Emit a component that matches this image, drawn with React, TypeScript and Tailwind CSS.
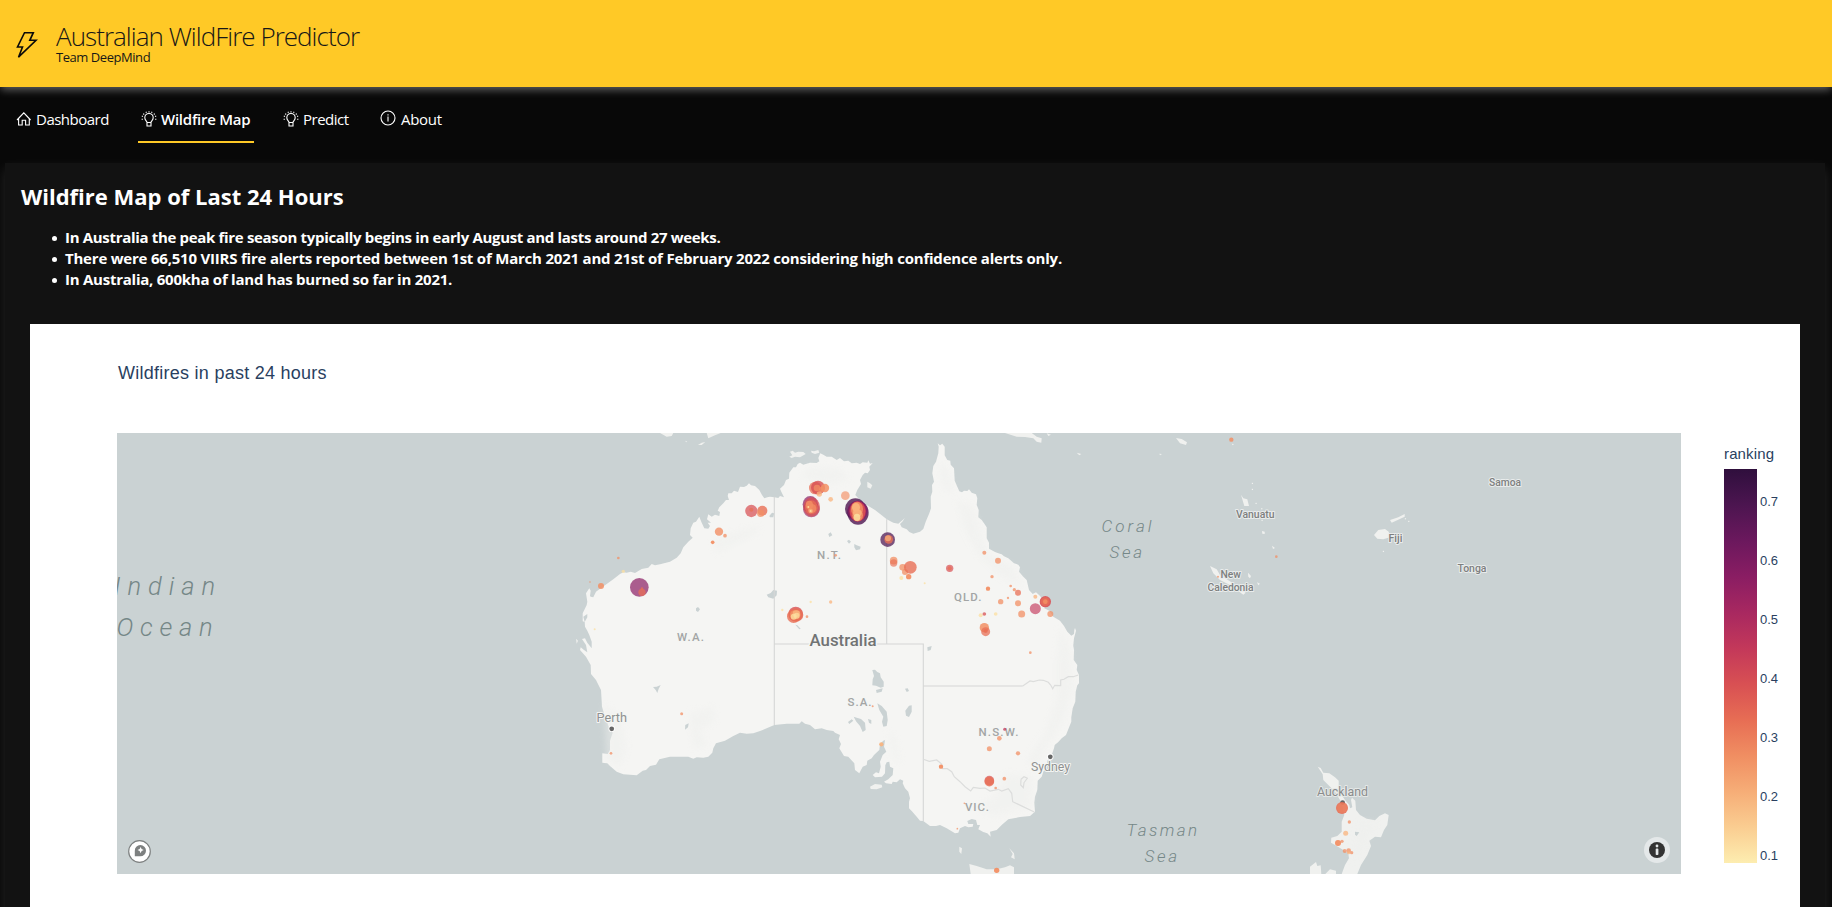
type Pt = [number, number];
type Dot = [number, number, number, string, number?];

// Survey sheets: each sheet stores points at three units per map unit, from its own origin.
const at = (ox: number, oy: number, pts: Pt[]): Pt[] =>
  pts.map(([x, y]) => [ox + x / 3, oy + y / 3]);
const toPath = (pts: Pt[]) =>
  'M' + pts.map(([x, y]) => `${x.toFixed(1)} ${y.toFixed(1)}`).join('L') + 'Z';

const mainland = toPath([
  ...at(560, 420, [[92,530],[100,532],[108,515],[122,505],[140,492],[160,478],[180,462],[190,457],[200,458],[212,455],[225,459],[245,447],[265,443],[275,432],[285,436],[300,433],[330,425],[350,413],[362,400],[370,382],[385,365],[398,353],[390,345],[392,325],[400,308],[408,305],[418,290],[425,308],[433,325],[445,326],[450,318],[443,308],[453,308],[441,298],[445,283],[455,290],[465,284],[478,288],[480,276],[473,272],[478,262],[490,250],[498,240],[507,240],[503,228],[505,220],[515,220],[522,212],[534,216],[540,200],[552,201],[560,197],[567,190],[573,196],[585,198],[598,210],[606,225],[613,235],[622,232],[630,230],[643,232],[655,234],[660,228],[672,232],[664,215],[660,206],[672,195],[678,180],[687,176],[688,158],[700,142],[708,142],[713,132]]),
  ...at(760, 430, [[120,98],[130,104],[150,98],[170,99],[178,94],[175,84],[181,70],[190,74],[200,80],[215,80],[230,90],[240,84],[252,94],[265,92],[275,100],[290,98],[300,102],[308,97],[322,98],[325,91],[330,101],[338,99],[328,110],[330,120],[323,130],[315,128],[308,135],[300,150],[303,162],[292,180],[286,195],[300,210],[320,225],[345,240],[365,256],[380,268],[400,278],[415,281],[428,270],[434,264],[428,274],[420,282],[425,292],[440,298],[448,306],[460,311],[480,305],[490,297],[497,275],[508,250],[513,235],[512,200],[517,185],[516,165],[522,155],[517,130],[520,108],[528,95],[535,70],[536,50],[533,40],[540,46],[547,41],[554,50],[554,76],[562,90],[571,92],[572,104],[582,115],[584,152],[598,184],[606,187],[612,182],[622,183],[627,178],[635,188],[648,193],[652,205],[650,225],[656,240],[655,262],[665,270],[672,280],[680,292],[680,325],[687,338],[687,356],[705,366],[715,370],[725,373],[732,379],[745,385],[762,400],[775,404],[780,412],[777,425],[790,440],[800,450],[807,480],[818,492],[828,487],[838,496]]),
  ...at(940, 430, [[300,498],[310,510],[315,522],[313,535],[328,542],[340,560],[360,572],[372,588],[382,605],[394,617],[402,612],[403,600],[405,594],[408,602],[402,625],[400,645]]),
  ...at(760, 620, [[940,78],[942,90],[941,120],[952,135],[950,150],[957,165],[957,190],[952,196],[947,215],[946,245],[938,265],[934,292],[934,305],[926,325],[918,345],[905,355],[895,366],[884,375],[882,385],[875,405],[862,422],[862,438],[850,455],[845,470],[833,482],[832,510],[825,530],[823,548],[825,575],[810,588],[780,591],[745,598],[725,615],[710,630],[690,635],[692,650],[682,640],[670,636],[655,628],[660,615],[652,615],[648,600],[635,597],[622,603],[625,612],[640,612],[638,620],[625,622],[615,618],[600,625],[595,638],[585,640],[560,625],[540,615],[528,618],[510,618],[490,603],[480,602],[470,590],[455,573],[447,565],[447,545],[450,535],[445,515],[435,505],[428,490],[430,482],[420,478],[410,487],[398,485],[395,492],[378,490],[372,485],[385,478],[398,465],[400,445],[390,440],[388,425],[380,427],[376,436],[375,460],[366,470],[345,472],[338,465],[348,457],[357,460],[362,440],[360,425],[368,405],[379,395],[372,380],[375,360],[370,362],[360,372],[358,390],[342,405],[335,415],[322,422],[320,435],[308,440],[298,460],[285,450],[283,430],[265,410],[252,408],[238,385],[243,372],[236,358],[240,345],[225,338],[220,333],[200,330],[185,325],[165,328],[150,315],[135,311],[125,304],[118,311],[80,311],[43,315],[20,325],[0,333]]),
  ...at(560, 420, [[600,933],[580,940],[560,941],[540,938],[520,948],[495,962],[468,970],[460,985],[457,998],[445,1010],[430,1013],[410,1012],[400,1016],[385,1010],[330,1010],[298,1018],[288,1034],[270,1038],[258,1050],[248,1052],[230,1066],[190,1063],[170,1055],[150,1038],[142,1030],[127,1028],[127,1000],[143,1002],[150,990],[150,962],[158,938],[148,925],[135,890],[126,860],[123,810],[108,780],[93,762],[92,735],[78,710],[60,690],[62,682],[72,690],[82,697],[78,675],[66,657],[75,655],[82,668],[95,685],[95,665],[88,645],[82,632],[75,620],[74,606],[82,592],[82,582],[70,590],[74,606],[68,604],[68,580],[80,555],[82,545],[78,520],[88,505],[92,512],[90,528]]),
]);

const islands = [
  at(560, 420, [[300,39],[340,39],[335,48],[320,50]]),
  at(560, 420, [[440,39],[482,39],[465,46],[445,55]]),
  at(560, 420, [[414,75],[425,68],[436,66],[425,75]]),
  at(560, 420, [[376,62],[382,65],[378,67]]),
  at(560, 420, [[48,656],[54,662],[50,671]]),
  at(760, 430, [[90,65],[98,62],[105,68],[115,65],[130,66],[137,72],[120,82],[105,80],[95,84],[88,80],[97,76]]),
  at(760, 430, [[153,62],[162,64],[175,60],[178,68],[165,72],[155,68]]),
  at(760, 430, [[322,155],[330,160],[337,166],[332,176],[322,172]]),
  at(940, 430, [[195,9],[275,9],[290,20],[305,25],[304,38],[290,35],[280,25],[255,21],[230,20]]),
  at(940, 430, [[320,10],[333,14],[325,18]]),
  at(940, 430, [[410,68],[424,72],[418,76]]),
  at(940, 430, [[658,71],[666,72],[660,76]]),
  at(940, 430, [[708,24],[725,27],[741,37],[738,45],[720,40]]),
  at(760, 620, [[330,500],[345,492],[365,494],[367,502],[350,508],[332,507]]),
  at(760, 620, [[598,680],[606,685],[604,702],[598,695]]),
  at(760, 620, [[748,685],[762,700],[764,718],[753,712],[758,702]]),
  at(760, 620, [[628,732],[650,738],[680,748],[710,748],[735,742],[750,736],[762,742],[762,762],[632,762]]),
  at(1200, 430, [[123,194],[130,205],[142,208],[147,228],[133,228]]),
  at(1200, 430, [[186,303],[194,305],[194,312],[187,311]]),
  at(1200, 430, [[216,347],[225,354],[219,357]]),
  at(1200, 430, [[30,408],[50,418],[60,435],[92,455],[125,480],[137,488],[130,494],[90,465],[60,450],[40,430]]),
  at(1200, 430, [[144,428],[153,438],[150,445],[145,440]]),
  at(1200, 430, [[171,457],[180,461],[175,466]]),
  at(1200, 430, [[522,315],[535,300],[555,297],[566,305],[570,322],[550,328],[532,326]]),
  at(1200, 430, [[570,270],[595,262],[614,252],[614,260],[598,268],[575,278]]),
  at(1200, 430, [[95,41],[102,42],[98,46]]),
  at(1280, 740, [[113,80],[122,84],[130,98],[148,100],[165,112],[176,122],[176,140],[185,165],[195,180],[208,195],[210,205],[217,202],[213,180],[216,173],[226,182],[228,210],[240,225],[260,236],[285,241],[298,228],[315,220],[326,225],[322,255],[312,270],[303,292],[285,290],[268,302],[273,318],[262,345],[243,375],[232,402],[185,402],[195,375],[207,355],[205,340],[190,330],[165,315],[153,308],[154,293],[172,288],[185,275],[185,245],[193,225],[188,200],[180,180],[165,155],[145,135],[130,120],[128,103]]),
  at(1280, 740, [[90,402],[90,380],[108,366],[112,378],[122,376],[124,402]]),
  at(1280, 740, [[136,402],[150,388],[168,392],[168,402]]),
].map(toPath).join('');

const specks = at(1200, 430, [[157,160],[157,178],[168,220],[185,236],[186,271],[616,266],[626,274],[550,364]]);

const lakes = [
  at(560, 420, [[408,565],[414,561],[420,568],[414,576],[408,572]]),
  at(560, 420, [[620,524],[632,519],[640,510],[651,512],[650,526],[640,536],[625,532]]),
  at(560, 420, [[628,288],[636,278],[643,280],[640,292],[630,292]]),
  at(560, 420, [[805,342],[812,337],[817,346],[808,351]]),
  at(560, 420, [[279,801],[290,800],[302,795],[296,806],[292,819],[287,810]]),
  at(560, 420, [[376,915],[386,910],[384,922],[375,929]]),
  at(560, 420, [[706,614],[712,616],[722,626],[718,628]]),
  at(760, 430, [[261,333],[267,329],[273,335],[267,341]]),
  at(760, 430, [[283,342],[290,346],[302,350],[300,358],[288,361],[283,352]]),
  at(760, 620, [[337,150],[345,149],[352,156],[360,160],[362,172],[371,185],[371,200],[362,203],[348,197],[337,196],[338,178],[342,168]]),
  at(760, 620, [[348,210],[368,205],[365,215],[350,219]]),
  at(760, 620, [[352,250],[365,258],[380,275],[383,300],[380,318],[370,320],[366,305],[370,290],[358,270]]),
  at(760, 620, [[281,290],[290,293],[303,297],[315,308],[317,330],[308,336],[300,318],[288,304]]),
  at(760, 620, [[264,306],[275,298],[280,302],[268,312]]),
  at(760, 620, [[324,297],[334,300],[334,312],[327,308]]),
  at(760, 620, [[435,206],[443,205],[447,213],[440,216]]),
  at(760, 620, [[436,272],[447,257],[455,256],[455,275],[447,291],[438,287]]),
  at(760, 620, [[502,82],[515,78],[512,90],[503,93]]),
  at(1280, 740, [[225,275],[238,277],[230,288],[225,284]]),
].map(toPath).join('');

const line = (pts: Pt[]) => toPath(pts).replace('Z', '');
const borders = [
  line(at(760, 430, [[43,200],[43,885]])),
  line(at(760, 430, [[380,268],[380,642]])),
  line(at(760, 620, [[43,72],[490,72],[490,603]])),
  line(at(760, 620, [[490,198],[788,198]])),
].join('');
const rivers = [
  line(at(760, 620, [[788,198],[800,190],[810,183],[820,185],[838,180],[850,181],[865,187],[872,195],[878,206],[884,196],[902,197],[902,180],[912,178],[925,170],[940,170],[955,165]])),
  line(at(760, 620, [[490,418],[508,424],[530,420],[545,432],[548,446],[562,446],[575,455],[583,470],[600,485],[615,500],[632,513],[640,502],[660,505],[675,504],[690,513],[715,508],[725,513],[745,506],[755,520],[758,545],[823,576]])),
  line(at(760, 620, [[783,478],[792,470],[802,475],[792,488],[790,503],[782,495],[783,478]])),
].join('');

const relief = [
  at(560, 420, [[460,360],[540,330],[600,320],[590,340],[520,375],[470,400]]),
  at(560, 420, [[385,880],[460,860],[465,900],[420,930],[440,980],[400,985]]),
  at(560, 420, [[130,850],[180,890],[200,980],[180,1040],[140,1020]]),
  at(760, 430, [[150,110],[240,115],[270,150],[200,165],[120,140]]),
  at(760, 430, [[590,210],[640,230],[660,300],[680,370],[760,410],[790,470],[720,440],[650,370],[610,290]]),
  at(760, 430, [[540,100],[565,120],[580,180],[560,190],[540,140]]),
  at(760, 620, [[900,20],[930,80],[940,200],[910,300],[850,400],[830,450],[800,420],[860,330],[890,230],[890,120]]),
  at(760, 620, [[740,460],[820,470],[815,560],[700,590],[650,560],[700,530]]),
  at(760, 620, [[385,330],[410,360],[420,430],[400,420]]),
  at(1280, 740, [[240,240],[290,250],[260,300],[225,370],[215,340]]),
].map(toPath).join('');

const Y = '#fcdf9f', P = '#f9b37c', O = '#f28f64', R = '#e86f55', D = '#d85053', M = '#c3385a', V = '#8a1d63', U = '#4c1550';

const fires: { o: Pt; d: Dot[] }[] = [
  { o: [560, 420], d: [
    [175,414,4,O],[190,454,5,Y],[90,486,2.5,O],[123,498,9,O,.85],[238,502,28,V,.7],[246,517,11,R],[246,506,4,R],[104,628,3,Y],
    [477,335,12.5,O,.8],[495,347,5.5,O],[458,367,5.5,O,.95],[574,273,18.5,D,.72],[574,269,6,R],[607,272,15,R,.8],[602,280,11,O],
    [365,881,4.5,O],[153,1000,4,O],[667,570,3.5,Y],[752,546,3.5,Y],[741,590,4,O],[812,546,5,P],[812,238,7,P],[827,406,4,O],
  ]},
  { o: [760, 430], d: [
    [166,174,19,R],[174,173,21,D,.8],[195,174,12.5,O,.85],[171,174,10,O],[185,178,8,O],[178,192,8,P],
    [256,197,13,O,.65],[383,329,22,U,.72],[386,328,13,R,.8],[384,325,9,P],
    [401,392,11.5,O],[401,399,11,R,.65],[428,412,10,O],[435,426,9,O],[451,412,19,R,.8],[446,440,8,O,.95],[424,444,6,Y],[494,460,3,Y],
    [569,415,11,D,.7],[569,415,6,R],[673,368,6,O],[714,392,9,O],[696,440,5,O],[684,476,6.5,O,.95],[722,515,8,O],
  ]},
  { o: [940, 430], d: [
    [212,468,4,O],[223,479,5,O],[234,488,9,R],[204,504,3.5,O],[234,520,9,O],[245,552,10.5,O],[286,536,16.5,M,.65],[286,500,6,P],
    [316,515,17,D,.9],[316,515,13,R],[316,515,7,O,.9],[331,552,9,O],[122,556,6,Y],[133,552,5.5,D],[167,552,5.5,Y],
    [133,593,14,O,.85],[137,605,13.5,R,.75],[137,603,6,R],
  ]},
  { o: [760, 620], d: [
    [811,98,4,O],[338,259,3,O],[364,373,6.5,P,.9],[734,328,4.5,M],[718,355,7,O],[688,386,7.5,O],[774,400,6.5,O],[543,440,6.5,O,.95],
    [733,476,5.5,O],[707,504,4,O],[613,550,2.5,O],[592,626,2.5,O],[710,751,8,O,.95],
    [688,482,14.5,D,.7],[688,485,14.5,R,.8],
  ]},
  { o: [1200, 430], d: [[94,29,6.5,O,.85],[229,380,4,O],[54,440,3,O]] },
  { o: [1280, 740], d: [
    [186,204,18,R,.9],[186,204,15,O,.35],[208,246,5,O],[197,280,7.5,P],[174,309,9,O,.95],[186,304,5,O],[194,333,6,O],[206,332,7,O],[215,338,5,O],[206,338,5,P],
  ]},
];

type Blob = [number, number, number, number, string, number];
// Dense clusters, drawn as stacked translucent ellipses.
const clusters: Blob[] = [
  [151,223,23,25,V,.7],[154,238,25,24,V,.6],[155,231,25,29,D,.75],[154,232,19,21,R,.8],[148,225,11,13,O,.85],[156,235,13,13,O,.8],[152,243,7,7,P,.7],[145,231,3,3,Y,.9],[152,243,3,3,Y,.9],
  [286,237,31,32,U,.8],[294,248,32,36,U,.8],[293,243,30,31,V,.8],[293,244,25,31,M,.8],[293,245,23,29,D,.9],[291,237,18,22,O,.9],[293,256,16,18,O,.9],[288,232,12,13,P,.95],[292,249,13,11,P,.9],[291,262,10,11,Y,.85],
  [107,552,22,22,D,.8],[101,559,20,20,R,.8],[108,555,22,20,R,.8],[106,554,16,14,O,.9],[109,551,11,10,P,.9],[101,560,9,9,Y,.8],[110,557,9,9,Y,.7],
];

function MapLabel({ x, y, w, size, fill = '#8f9191', weight = 500, halo = '#f4f5f3', haloW = 2, children }: {
  x: number; y: number; w: number; size: number; fill?: string; weight?: number; halo?: string; haloW?: number; children: string;
}) {
  return (
    <text x={x} y={y} textLength={w} lengthAdjust={children.includes('.') ? 'spacing' : 'spacingAndGlyphs'} fontSize={size}
      fontWeight={weight} fill={fill} stroke={halo} strokeWidth={haloW} strokeLinejoin="round" paintOrder="stroke"
      fontFamily="Roboto, sans-serif">{children}</text>
  );
}

function SeaLabel({ x, y, w, size, weight = 350, children }: { x: number; y: number; w: number; size: number; weight?: number; children: string }) {
  return (
    <text x={x} y={y} textLength={w} fontSize={size} fontWeight={weight} fontStyle="italic" fill="#758787" fontFamily="Roboto, sans-serif">{children}</text>
  );
}

function WildfireMap() {
  return (
    <svg viewBox="117 433 1564 441" width="1564" height="441" className="block shrink-0 bg-[#cad2d3]">
      <path d={mainland} fill="#f5f5f3" />
      <path d={islands} fill="#f0f1ef" />
      {specks.map(([x, y], i) => <rect key={i} x={x - 0.5} y={y - 0.5} width="1.2" height="1.2" fill="#f0f1ef" />)}
      <path d={relief} fill="#eeefed" opacity=".45" className="blur-[3px]" />
      <path d={lakes} fill="#cad2d3" />
      <path d={borders} fill="none" stroke="#d5d6d5" strokeWidth="1.1" />
      <path d={rivers} fill="none" stroke="#dcdddc" strokeWidth="1.2" />

      <SeaLabel x={114} y={595} w={101} size={25.5} weight={300}>Indian</SeaLabel>
      <SeaLabel x={116.5} y={635.5} w={96} size={25.5} weight={300}>Ocean</SeaLabel>
      <SeaLabel x={1101.5} y={532} w={50} size={17}>Coral</SeaLabel>
      <SeaLabel x={1109.5} y={558} w={32.5} size={17}>Sea</SeaLabel>
      <SeaLabel x={1126.5} y={836} w={70.5} size={17}>Tasman</SeaLabel>
      <SeaLabel x={1144.5} y={861.5} w={32.5} size={17}>Sea</SeaLabel>

      <MapLabel x={677} y={640.7} w={27} size={11.5} fill="#a3a5a5">W.A.</MapLabel>
      <MapLabel x={817} y={559} w={24} size={11.5} fill="#a3a5a5">N.T.</MapLabel>
      <MapLabel x={954} y={601} w={27.5} size={11.5} fill="#a3a5a5">QLD.</MapLabel>
      <MapLabel x={847.5} y={706} w={24} size={11.5} fill="#a3a5a5">S.A.</MapLabel>
      <MapLabel x={978.5} y={736} w={40} size={11.5} fill="#a3a5a5">N.S.W.</MapLabel>
      <MapLabel x={965} y={811} w={24} size={11.5} fill="#a3a5a5">VIC.</MapLabel>
      <MapLabel x={809.5} y={646} w={67} size={16.5} fill="#717373" haloW={3}>Australia</MapLabel>

      <circle cx="611.7" cy="728.8" r="3.2" fill="#fff" /><circle cx="611.7" cy="728.8" r="2.4" fill="#666" />
      <circle cx="1050.3" cy="756.8" r="3.2" fill="#fff" /><circle cx="1050.3" cy="756.8" r="2.4" fill="#666" />
      <circle cx="1342.6" cy="802.6" r="2.4" fill="#666" />
      <MapLabel x={596.5} y={722} w={30.5} size={13} weight={400}>Perth</MapLabel>
      <MapLabel x={1031} y={771.3} w={39} size={13} weight={400}>Sydney</MapLabel>
      <MapLabel x={1317} y={796} w={51} size={13} weight={400} fill="#8a8c8c" halo="#e4e8e7">Auckland</MapLabel>

      <MapLabel x={1489} y={486} w={32} size={10.8} fill="#7d7f7f" halo="#e9ecec">Samoa</MapLabel>
      <MapLabel x={1236} y={518} w={38.5} size={10.8} fill="#7d7f7f" halo="#e9ecec">Vanuatu</MapLabel>
      <MapLabel x={1388.5} y={542.3} w={14} size={10.8} fill="#7d7f7f" halo="#e9ecec">Fiji</MapLabel>
      <MapLabel x={1457.5} y={572.3} w={29} size={10.8} fill="#7d7f7f" halo="#e9ecec">Tonga</MapLabel>
      <MapLabel x={1220.5} y={578} w={20.5} size={10.8} fill="#7d7f7f" halo="#e9ecec">New</MapLabel>
      <MapLabel x={1207.5} y={591} w={46} size={10.8} fill="#7d7f7f" halo="#e9ecec">Caledonia</MapLabel>

      {fires.flatMap(({ o, d }) => d.map(([x, y, r, c, a = 0.75]) => (
        <circle key={`${o[0]}-${o[1]}-${x}-${y}-${r}`} cx={o[0] + x / 3} cy={o[1] + y / 3} r={r / 3} fill={c} opacity={a} />
      )))}
      {clusters.map(([x, y, rx, ry, c, a], i) => (
        <ellipse key={i} cx={760 + x / 3} cy={430 + y / 3} rx={rx / 3} ry={ry / 3} fill={c} opacity={a} />
      ))}

      <circle cx="139.5" cy="851.5" r="10.8" fill="#fff" stroke="#7d8080" strokeWidth="1.2" />
      <path d="M134.8 856.2v-5.4a5.6 5.6 0 1 1 5.4 5.4z" fill="#7d8080" />
      <path d="M140.6 847l1 2.1 2.1 1-2.1 1-1 2.1-1-2.1-2.1-1 2.1-1z" fill="#fff" />

      <circle cx="1657" cy="850" r="13" fill="#e4e8e9" />
      <circle cx="1657" cy="850" r="8" fill="#333" />
      <rect x="1655.7" y="848.6" width="2.7" height="6.4" rx=".8" fill="#e4e8e9" />
      <circle cx="1657" cy="846" r="1.4" fill="#e4e8e9" />
    </svg>
  );
}

const matter = ['#2f0f3d', '#4c1550', '#6b185d', '#8a1d63', '#a82860', '#c3385a', '#d85053', '#e76d54', '#f08e62', '#f6ad77', '#facd91', '#fdedb0'];

function ColorScale() {
  return (
    <svg width="70" height="441" viewBox="1724 433 70 441" className="block shrink-0" fontFamily="'Liberation Sans', Arial, sans-serif" fill="#2a3f5f">
      <defs>
        <linearGradient id="matter" x1="0" y1="0" x2="0" y2="1">
          {matter.map((c, i) => <stop key={c} offset={i / 11} stopColor={c} />)}
        </linearGradient>
      </defs>
      <text x="1724" y="458.5" fontSize="15" textLength="50">ranking</text>
      <rect x="1724" y="469" width="33" height="394" fill="url(#matter)" />
      {['0.7', '0.6', '0.5', '0.4', '0.3', '0.2', '0.1'].map((t, i) => (
        <text key={t} x="1760" y={506 + i * 59} fontSize="13">{t}</text>
      ))}
    </svg>
  );
}

function Home() {
  return (
    <svg width="16" height="16" viewBox="0 0 16 16" fill="none" stroke="#fff" strokeWidth="1.1">
      <path d="M1 9 7.8 1.800l6.800 7.200M2.600 7.500v6.500h3.600V9.200h3.400V14h3.700V7.500" />
    </svg>
  );
}

function Bulb() {
  return (
    <svg width="16" height="16" viewBox="0 0 16 16" fill="none" stroke="#fff" strokeWidth="1.1">
      <path d="M6 11.5c0-1.4-2.2-2.2-2.2-4.8a4.200 4.200 0 0 1 8.400 0c0 2.600-2.200 3.400-2.200 4.800zM6 11.500V15h4v-3.500" />
      <path d="M8 .2v1.200M5 .8l.4 1.100M11 .8l-.4 1.100M2.300 2.600l.9.900M13.700 2.600l-.9.900M.8 5l1.200.4M15.200 5l-1.200.4M.6 8.200h1.300M15.400 8.200h-1.300" />
    </svg>
  );
}

function Info() {
  return (
    <svg width="16" height="16" viewBox="0 0 16 16" fill="none" stroke="#fff" strokeWidth="1.1" className="-mt-0.5">
      <circle cx="8" cy="8" r="7" />
      <path d="M8 6.500v5M8 4.200v1.200" />
    </svg>
  );
}

const facts = [
  { text: 'In Australia the peak fire season typically begins in early August and lasts around 27 weeks.', cls: 'tracking-[-0.32px]' },
  { text: 'There were 66,510 VIIRS fire alerts reported between 1st of March 2021 and 21st of February 2022 considering high confidence alerts only.', cls: 'tracking-[-0.21px]' },
  { text: 'In Australia, 600kha of land has burned so far in 2021.', cls: 'tracking-[-0.245px]' },
];

export default function App() {
  return (
    <div className="flex h-[907px] flex-col overflow-hidden bg-[#080808] font-['Open_Sans','Noto_Sans',sans-serif] text-white">
      <header className="z-10 flex h-[87px] shrink-0 items-start bg-[#ffc926] text-[#171717] shadow-[0_4px_8px_-1px_rgba(255,255,255,0.35)]">
        <svg width="22" height="28" viewBox="0 0 22 28" className="mt-[31px] ml-4" fill="none" stroke="#0a0a0a" strokeWidth="1.6">
          <path d="M8.500 1.700h8.800l-3.500 7.600h6.200L2.500 26.200l4-10.200H1.500z" />
        </svg>
        <div className="mt-[22px] ml-[18px]">
          <h1 className="text-[26px] leading-[28px] font-[350] tracking-[-0.97px]">Australian WildFire Predictor</h1>
          <p className="text-[13px] leading-[14px] tracking-[-0.45px]">Team DeepMind</p>
        </div>
      </header>

      <nav className="flex h-[76px] shrink-0 items-start pt-4 text-[15px] leading-[22px]">
        <a className="flex h-8 w-[138px] items-center gap-1 pl-4 tracking-[-0.5px]"><Home />Dashboard</a>
        <a className="flex h-10 w-[116px] items-start gap-1 border-b-2 border-[#ffc926] py-[5px] pl-[3px] font-semibold tracking-[-0.25px]"><span className="pt-[3px]"><Bulb /></span>Wildfire Map</a>
        <a className="ml-[28px] flex h-8 w-[97px] items-center gap-1 pl-px tracking-[-0.5px]"><Bulb />Predict</a>
        <a className="flex h-8 items-center gap-[5px] pl-px tracking-[-0.28px]"><Info />About</a>
      </nav>

      <main className="mr-[7px] ml-[5px] flex h-[900px] shrink-0 flex-col bg-[#121212] shadow-[0_6px_12px_rgba(255,255,255,0.12)]">
        <h2 className="mt-[17px] ml-4 text-[22px] leading-8 font-bold">Wildfire Map of Last 24 Hours</h2>
        <ul className="mt-[15px] ml-[47px] text-[15px] leading-[21px] font-bold">
          {facts.map((f) => (
            <li key={f.text} className="flex items-center gap-2">
              <span className="mt-0.5 size-[5px] rounded-full bg-white" />
              <span className={f.cls}>{f.text}</span>
            </li>
          ))}
        </ul>
        <section className="mt-[34px] mr-[25px] ml-[25px] flex-1 bg-white">
          <h3 className="h-[109px] pt-[37px] pl-[88px] font-['Liberation_Sans',Arial,sans-serif] text-[18px] leading-6 tracking-[0.26px] text-[#2a3f5f]">Wildfires in past 24 hours</h3>
          <div className="flex gap-[43px] pl-[87px]">
            <WildfireMap />
            <ColorScale />
          </div>
        </section>
      </main>
    </div>
  );
}
